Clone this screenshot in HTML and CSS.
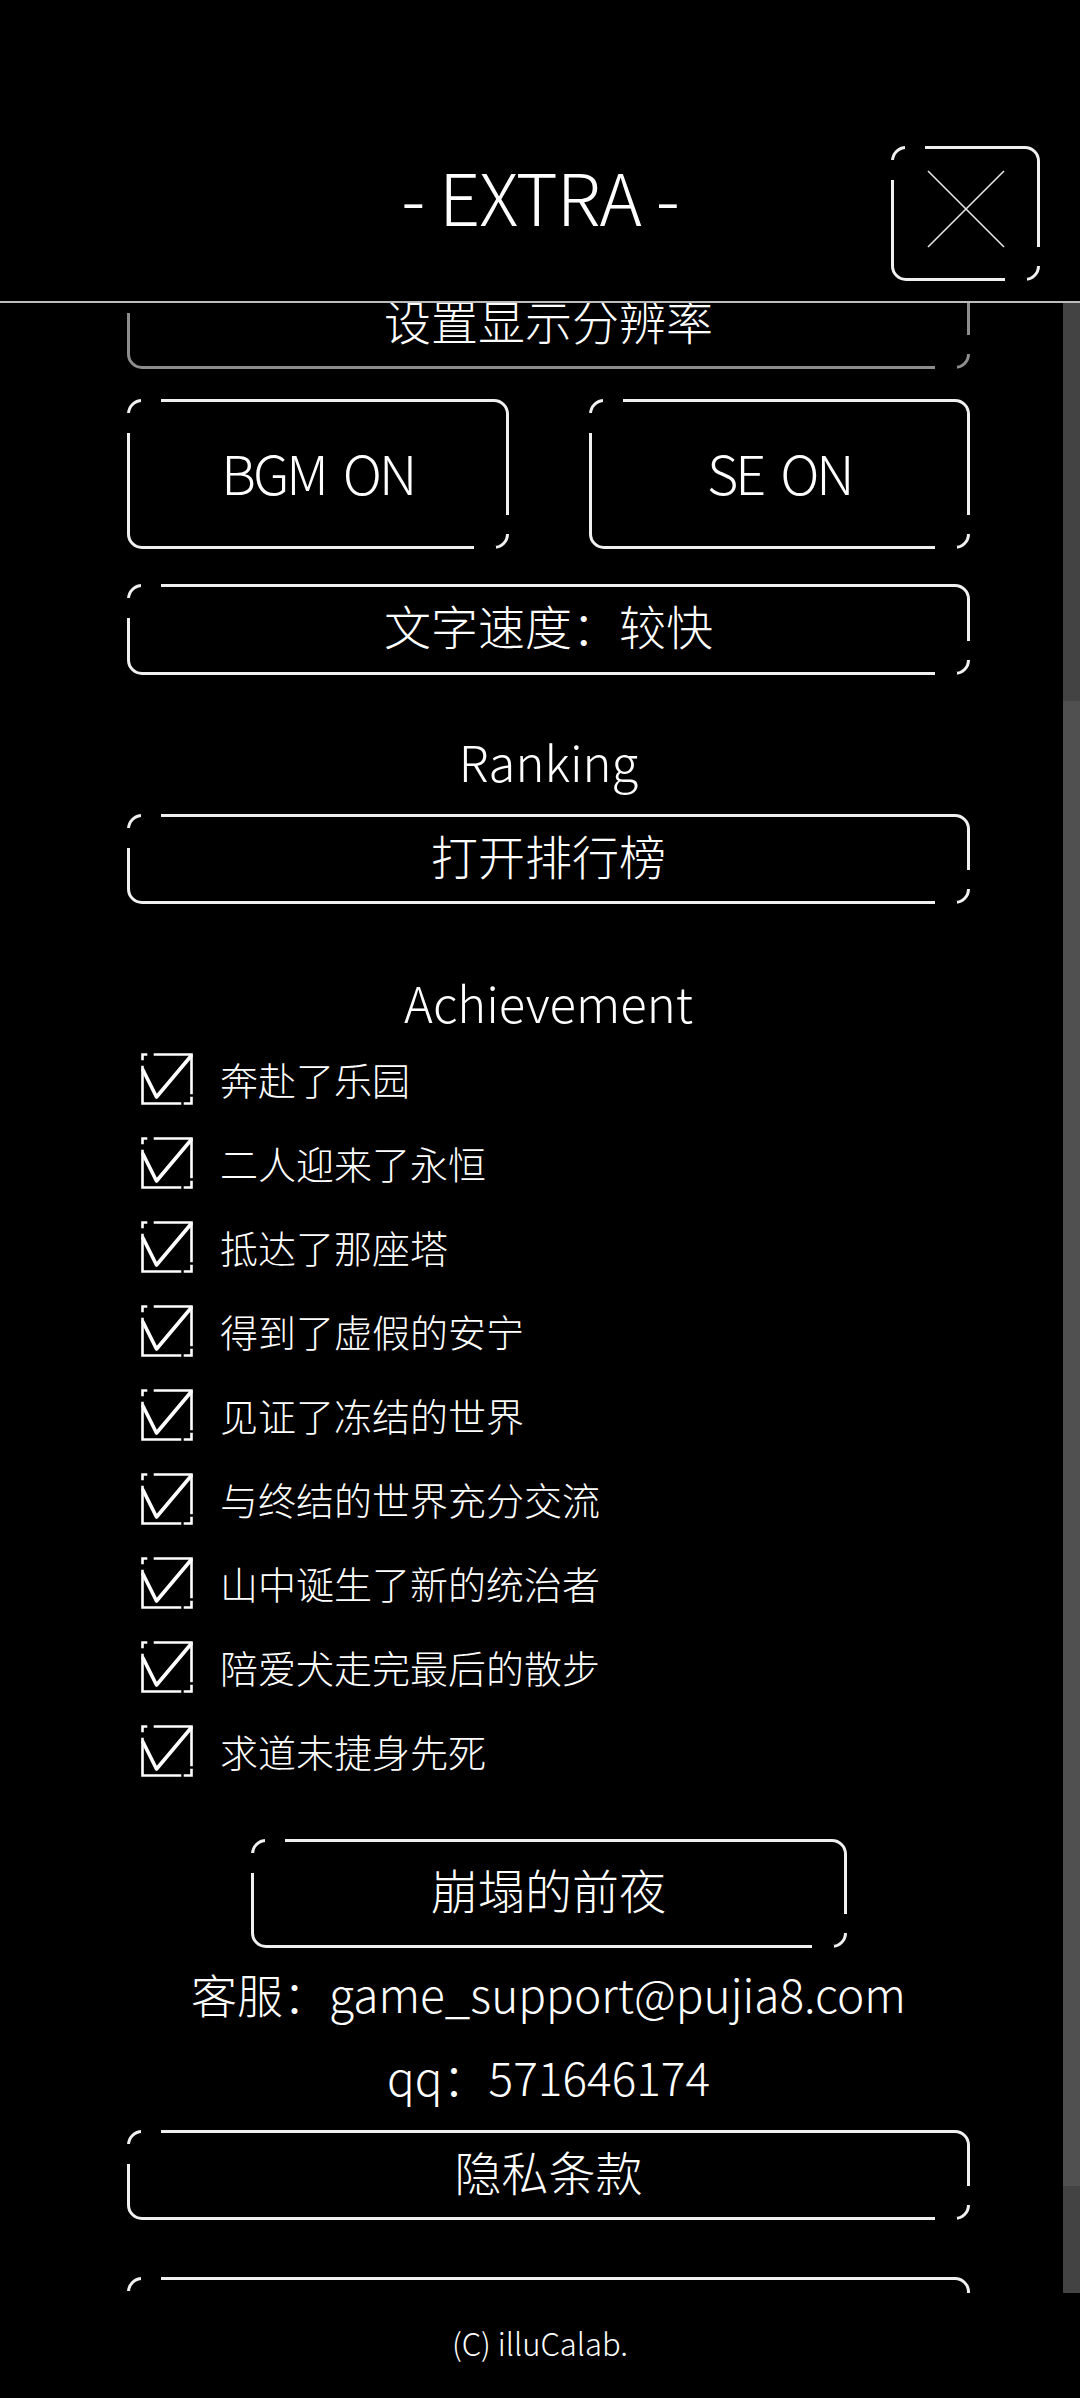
FILE: index.html
```html
<!doctype html>
<html>
<head>
<meta charset="utf-8">
<link rel="stylesheet" href="styles.css">
<title>EXTRA</title>
</head>
<body>
<div class="screen">

    <header class="top">
        <h1 class="title">- EXTRA -</h1>
        <button class="close frame" type="button">
            <svg width="78" height="78" viewBox="0 0 78 78"><path d="M1 1 L77 77 M77 1 L1 77" stroke="#e6e6e6" stroke-width="1.6" fill="none"/></svg>
        </button>
    </header>

    <div class="middle">
        <div class="viewport">
            <div class="content">

                <button class="frame wide dim" type="button">设置显示分辨率</button>

                <div class="pair">
                    <button class="frame tall latin" type="button">BGM ON</button>
                    <button class="frame tall latin" type="button">SE ON</button>
                </div>

                <button class="frame wide speed" type="button">文字速度：较快</button>

                <h2 class="heading ranking">Ranking</h2>
                <button class="frame wide" type="button">打开排行榜</button>

                <h2 class="heading achieve">Achievement</h2>
                <ul class="checks">
                    <li><svg class="box" width="52" height="52" viewBox="0 0 52 52"><use href="#tick"/></svg>奔赴了乐园</li>
                    <li><svg class="box" width="52" height="52" viewBox="0 0 52 52"><use href="#tick"/></svg>二人迎来了永恒</li>
                    <li><svg class="box" width="52" height="52" viewBox="0 0 52 52"><use href="#tick"/></svg>抵达了那座塔</li>
                    <li><svg class="box" width="52" height="52" viewBox="0 0 52 52"><use href="#tick"/></svg>得到了虚假的安宁</li>
                    <li><svg class="box" width="52" height="52" viewBox="0 0 52 52"><use href="#tick"/></svg>见证了冻结的世界</li>
                    <li><svg class="box" width="52" height="52" viewBox="0 0 52 52"><use href="#tick"/></svg>与终结的世界充分交流</li>
                    <li><svg class="box" width="52" height="52" viewBox="0 0 52 52"><use href="#tick"/></svg>山中诞生了新的统治者</li>
                    <li><svg class="box" width="52" height="52" viewBox="0 0 52 52"><use href="#tick"/></svg>陪爱犬走完最后的散步</li>
                    <li><svg class="box" width="52" height="52" viewBox="0 0 52 52"><use href="#tick"/></svg>求道未捷身先死</li>
                </ul>

                <button class="frame eve" type="button">崩塌的前夜</button>

                <div class="contact">
                    <p>客服：game_support@pujia8.com</p>
                    <p>qq：571646174</p>
                </div>

                <button class="frame wide" type="button">隐私条款</button>
                <button class="frame wide last" type="button"></button>

            </div>
        </div>
        <div class="scrollbar">
            <div class="track-top"></div>
            <div class="thumb"></div>
            <div class="track-end"></div>
        </div>
    </div>

    <footer class="copy">(C) illuCalab.</footer>

</div>

<svg width="0" height="0" class="defs">
    <defs>
        <g id="tick" fill="none" stroke="#fff" stroke-linecap="square">
            <path d="M1.5 6 V1.5 H5" stroke-width="2.6"/>
            <path d="M14 1.5 H50.5 V40" stroke-width="2.6"/>
            <path d="M1.5 14 V50.5 H39" stroke-width="2.6"/>
            <path d="M44 50.5 H50.5 V45" stroke-width="2.6"/>
            <path d="M2 17 L15.5 44 L50 3" stroke-width="3.6" stroke-linecap="round" stroke-linejoin="round"/>
        </g>
    </defs>
</svg>
</body>
</html>
```

FILE: styles.css
```css
html
{
    background:#000;
}
body
{
    margin:0;
    background:#000;
    color:#fff;
    font-family:"Noto Sans CJK SC", "Noto Sans", sans-serif;
    font-weight:300;
}
button
{
    font:inherit;
    color:inherit;
    background:none;
    padding:0;
    cursor:pointer;
}
.defs
{
    position:absolute;
}

.screen
{
    width:1080px;
    height:2398px;
    display:flex;
    flex-direction:column;
    overflow:hidden;
}

/* header */
.top
{
    flex:none;
    box-sizing:border-box;
    border-bottom:2px solid #bcbcbc;
    height:303px;
    display:grid;
    grid-template-columns:1fr auto 1fr;
    align-items:start;
    padding-top:146px;
}
.title
{
    grid-column:2;
    margin:13px 0 0 0;
    font-size:72px;
    line-height:72px;
    font-weight:300;
    letter-spacing:-1px;
    white-space:nowrap;
}
.close
{
    grid-column:3;
    justify-self:end;
    margin-right:40px;
    width:149px;
    height:135px;
    padding:0;
}

/* the button frame with broken corners */
.frame
{
    position:relative;
    box-sizing:border-box;
    border:3px solid #f0f0f0;
    border-radius:15px;
    display:flex;
    align-items:center;
    justify-content:center;
    padding-bottom:10px;
    font-size:47px;
    line-height:1;
}
.frame::before
{
    content:"";
    position:absolute;
    inset:-3px;
    pointer-events:none;
    background:
        linear-gradient(#000,#000) 14px 0 / 20px 3px no-repeat,
        linear-gradient(#000,#000) 0 14px / 3px 20px no-repeat,
        linear-gradient(#000,#000) right 13px bottom 0 / 22px 3px no-repeat,
        linear-gradient(#000,#000) right 0 bottom 15px / 3px 19px no-repeat;
}
.frame.dim
{
    border-color:#8d8d8d;
}

/* scrolling part */
.middle
{
    height:1990px;
    flex:none;
    display:flex;
}
.viewport
{
    width:1063px;
    overflow:hidden;
}
.content
{
    margin-top:-24px;
    padding-left:127px;
    width:843px;
    display:flex;
    flex-direction:column;
}
.wide
{
    width:843px;
    height:90px;
}
.speed
{
    margin-top:35px;
    height:91px;
}
.pair
{
    margin-top:30px;
    display:grid;
    grid-template-columns:1fr 1fr;
    column-gap:80px;
}
.tall
{
    height:150px;
}
.latin
{
    font-size:54px;
    letter-spacing:-3px;
    word-spacing:8px;
    padding-bottom:4px;
}

.heading
{
    margin:0;
    font-size:49px;
    line-height:60px;
    font-weight:300;
    text-align:center;
}
.ranking
{
    margin:56px 0 23px;
}
.achieve
{
    margin:68px 0 5px;
}

.checks
{
    list-style:none;
    margin:0;
    padding:0;
}
.checks li
{
    height:84px;
    display:flex;
    align-items:center;
    font-size:38px;
    line-height:1;
    padding-left:14px;
}
.box
{
    flex:none;
    margin-right:27px;
}

.eve
{
    align-self:center;
    width:596px;
    height:109px;
    margin-top:46px;
}

.contact
{
    margin:4px 0 12px;
    text-align:center;
    font-size:46px;
    line-height:83px;
}
.contact p
{
    margin:0;
}

.last
{
    margin-top:57px;
}

.scrollbar
{
    width:17px;
    flex:none;
    display:flex;
    flex-direction:column;
    background:#434343;
}
.track-top
{
    height:398px;
}
.thumb
{
    height:1485px;
    background:#505050;
}

/* footer */
.copy
{
    flex:1;
    display:flex;
    align-items:center;
    justify-content:center;
    font-size:31px;
    padding-bottom:6px;
}
```
